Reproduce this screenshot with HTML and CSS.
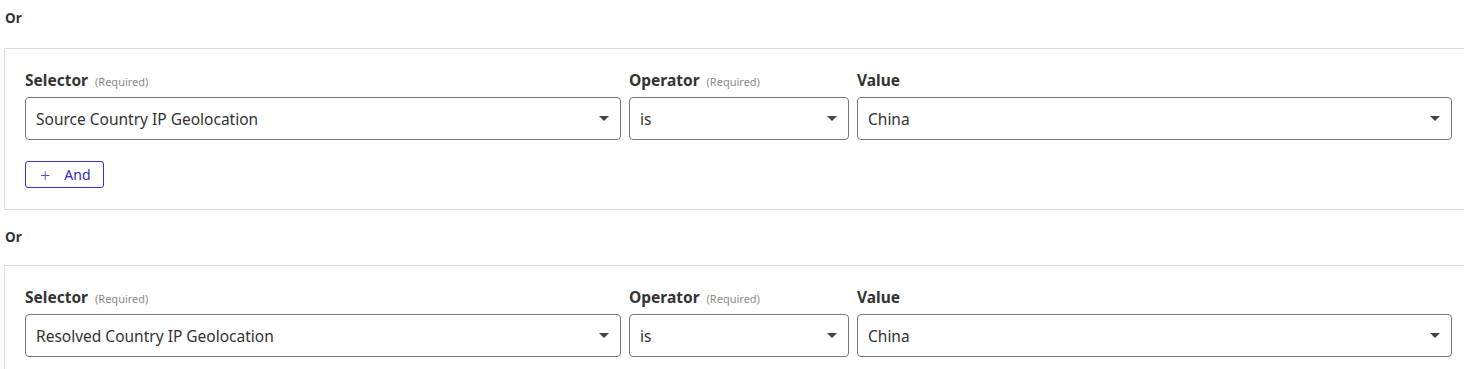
FILE: index.html
```html
<!DOCTYPE html>
<html lang="en">
<head>
<meta charset="utf-8">
<title>Conditions</title>
<link rel="stylesheet" href="styles.css">
</head>
<body>
  <div class="or or-first">Or</div>
  <section class="card">
    <div class="row">
      <div class="field">
        <div class="label"><span class="name">Selector</span><span class="req">(Required)</span></div>
        <div class="select"><span>Source Country IP Geolocation</span><span class="caret"></span></div>
      </div>
      <div class="field">
        <div class="label"><span class="name">Operator</span><span class="req">(Required)</span></div>
        <div class="select"><span>is</span><span class="caret"></span></div>
      </div>
      <div class="field">
        <div class="label"><span class="name">Value</span></div>
        <div class="select"><span>China</span><span class="caret"></span></div>
      </div>
    </div>
    <button class="and-btn" type="button"><span class="plus">+</span><span>And</span></button>
  </section>
  <div class="or">Or</div>
  <section class="card">
    <div class="row">
      <div class="field">
        <div class="label"><span class="name">Selector</span><span class="req">(Required)</span></div>
        <div class="select"><span>Resolved Country IP Geolocation</span><span class="caret"></span></div>
      </div>
      <div class="field">
        <div class="label"><span class="name">Operator</span><span class="req">(Required)</span></div>
        <div class="select"><span>is</span><span class="caret"></span></div>
      </div>
      <div class="field">
        <div class="label"><span class="name">Value</span></div>
        <div class="select"><span>China</span><span class="caret"></span></div>
      </div>
    </div>
  </section>
</body>
</html>
```

FILE: styles.css
```css
* { box-sizing: border-box; }
html, body { margin: 0; padding: 0; background: #fff; overflow: hidden; }
body {
  font-family: "Noto Sans", "Open Sans", sans-serif;
  color: #333;
  width: 1464px;
}
.or {
  font-size: 13.5px;
  font-weight: 700;
  line-height: 20px;
  color: #333;
  padding: 17px 5px 18px;
}
.or-first { padding-top: 8px; padding-bottom: 20px; }
.card {
  margin-left: 4px;
  width: 1490px;
  border: 1px solid #dcdcdc;
  padding: 21px 20px 21px 20px;
}
.row {
  display: grid;
  grid-template-columns: 596px 220px 595px;
  column-gap: 8px;
}
.label {
  height: 20px;
  line-height: 20px;
  margin-bottom: 7px;
  display: flex;
  align-items: baseline;
  white-space: nowrap;
}
.name { font-size: 15.5px; font-weight: 700; color: #333; }
.req { font-size: 11px; color: #8a8a8a; margin-left: 7px; }
.select {
  height: 43px;
  border: 1px solid #777;
  border-radius: 4px;
  display: flex;
  align-items: center;
  justify-content: space-between;
  padding: 0 11px 0 10px;
  font-size: 15.5px;
  color: #333;
}
.caret {
  width: 0; height: 0;
  border-left: 5px solid transparent;
  border-right: 5px solid transparent;
  border-top: 5px solid #444;
  margin-top: -1px;
}
.and-btn {
  margin-top: 21px;
  height: 27px;
  width: 79px;
  border: 1px solid #3434cc;
  border-radius: 3px;
  background: #fff;
  color: #2b2bc8;
  font-family: "Noto Sans", "Open Sans", sans-serif;
  font-size: 14px;
  display: flex;
  align-items: center;
  padding: 0 0 0 14px;
  gap: 14px;
}
.plus { font-size: 18px; font-weight: 300; color: #5050d0; line-height: 1; }
```
